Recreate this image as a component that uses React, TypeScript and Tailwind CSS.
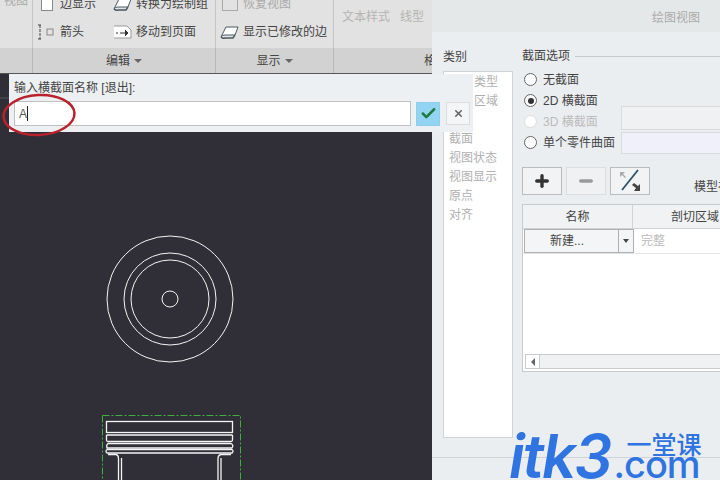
import { Check, Minus, Plus, X } from 'lucide-react'

const CATEGORY_ITEMS = ['截面', '视图状态', '视图显示', '原点', '对齐']

const RADIOS = [
  { label: '无截面', checked: false, disabled: false },
  { label: '2D 横截面', checked: true, disabled: false },
  { label: '3D 横截面', checked: false, disabled: true },
  { label: '单个零件曲面', checked: false, disabled: false },
]

function Caret() {
  return <span className="ml-1 h-0 w-0 border-x-[4px] border-t-[4px] border-x-transparent border-t-[#666]" />
}

function EdgeIcon() {
  return (
    <svg width="20" height="16" viewBox="0 0 20 16" fill="none" stroke="#4a5a62">
      <path d="M1 13 L6 3 H18 L15 11 H5 Q2 11 1 13 Z" fill="#fff" />
      <path d="M1 13 Q3 15 5 14 H13 L15 11" strokeWidth="1.400" />
    </svg>
  )
}

function ArrowIcon() {
  return (
    <svg width="20" height="20" viewBox="0 0 20 20" fill="none" stroke="#444">
      <path d="M3 3 V17 M1 3 H5 M1 17 H5" strokeDasharray="3 1" />
      <rect x="10" y="7" width="6" height="6" stroke="#888" />
    </svg>
  )
}

function MoveIcon() {
  return (
    <svg width="20" height="16" viewBox="0 0 20 16" fill="none" stroke="#333">
      <path d="M1 2 H14 L18 6 V14 H1" stroke="#999" fill="#fff" />
      <path d="M3 9 H5 M7 9 H14" />
      <path d="M12 6 L15 9 L12 12" fill="#333" />
    </svg>
  )
}

function RibbonItem({ icon, label, grey }: { icon: React.ReactNode; label: string; grey?: boolean }) {
  return (
    <div className={`flex h-[28px] items-center gap-[3px] whitespace-nowrap text-[12px] ${grey ? 'text-[#aaa]' : 'text-[#444]'}`}>
      <span className="flex w-[21px] justify-center">{icon}</span>
      {label}
    </div>
  )
}

function Ribbon() {
  return (
    <div className="flex h-[74px] shrink-0 flex-col overflow-hidden border-b border-[#555] bg-[#e2e2e2]">
      <div className="flex h-[48px] overflow-hidden">
        <div className="w-[33px] shrink-0 border-r border-[#c4c4c4]">
          <div className="mt-[-8px] pl-[4px] text-[12px] text-[#aaa]">视图</div>
        </div>
        <div className="flex w-[183px] shrink-0 gap-[16px] border-r border-[#c4c4c4] pl-[3px] pt-[16px]">
          <div className="mt-[-26px] flex flex-col">
            <RibbonItem icon={<span className="h-[14px] w-[12px] border border-[#888] bg-white" />} label="边显示" />
            <RibbonItem icon={<ArrowIcon />} label="箭头" />
          </div>
          <div className="mt-[-26px] flex flex-col">
            <RibbonItem icon={<EdgeIcon />} label="转换为绘制组" />
            <RibbonItem icon={<MoveIcon />} label="移动到页面" />
          </div>
        </div>
        <div className="w-[118px] shrink-0 border-r border-[#c4c4c4] pl-[3px] pt-[16px]">
          <div className="mt-[-26px] flex flex-col">
            <RibbonItem grey icon={<span className="h-[14px] w-[16px] border border-[#aaa]" />} label="恢复视图" />
            <RibbonItem icon={<EdgeIcon />} label="显示已修改的边" />
          </div>
        </div>
        <div className="flex gap-[10px] whitespace-nowrap pl-[8px] pt-[8px] text-[12px] text-[#b4b4b4]">
          <span>文本样式</span>
          <span>线型</span>
        </div>
      </div>
      <div className="flex flex-1 bg-[#d2d2d2] text-[12px] text-[#444]">
        <div className="w-[33px] shrink-0 border-r border-[#b8b8b8]" />
        <div className="flex w-[183px] shrink-0 items-center justify-center border-r border-[#b8b8b8]">
          编辑
          <Caret />
        </div>
        <div className="flex w-[118px] shrink-0 items-center justify-center border-r border-[#b8b8b8]">
          显示
          <Caret />
        </div>
        <div className="flex flex-1 items-center overflow-hidden whitespace-nowrap pl-[90px]">格</div>
      </div>
    </div>
  )
}

function Drawing() {
  return (
    <svg width="432" height="406" viewBox="0 74 432 406" fill="none" stroke="#f4f4f4" strokeWidth="1" className="block">
      <path d="M0 98 H10" stroke="#55555c" />
      <circle cx="170" cy="299" r="63" />
      <circle cx="170" cy="299" r="46" />
      <circle cx="170" cy="299" r="39" />
      <circle cx="170" cy="299" r="8" />
      <rect x="102.500" y="415.500" width="138" height="80" stroke="#3fae3f" strokeDasharray="7 2 2 2" />
      <rect x="106.500" y="421.500" width="126" height="11" strokeWidth="1.300" />
      <path d="M106.500 435 H232.500 M106.500 435 V440 Q106.500 441.500 108 441.500 H231 Q232.500 441.500 232.500 440 V435" strokeWidth="1.300" />
      <path d="M108 443.500 Q106 445 107 448 H232 Q234 445 231 443.500 Z" strokeWidth="1.300" />
      <path d="M107 449.500 H232 M107 449.500 Q105 451 107 453 H232 Q234 451 232 449.500" strokeWidth="1.300" />
      <path d="M108 454.500 H116 Q118.500 455 118.500 459 V480 M231 454.500 H221 Q218 455 218 459 V480 M121.500 458 V480 M221 458 V480" strokeWidth="1.300" />
    </svg>
  )
}

function PromptBar() {
  return (
    <div className="absolute left-[9px] top-[74px] flex h-[58px] w-[464px] flex-col bg-[#edf0f2] pl-[5px] pr-[3px]">
      <div className="flex h-[27px] items-center text-[12px] text-[#444]">输入横截面名称 [退出]:</div>
      <div className="flex items-center">
        <div className="flex h-[25px] w-[398px] items-center border border-[#c0c0c0] bg-white pl-[4px] text-[12px] text-[#555]">
          A<span className="h-[15px] w-px bg-[#222]" />
        </div>
        <div className="ml-[5px] flex h-[24px] w-[24px] items-center justify-center border border-[#8fcdea] bg-[#93d4f2]">
          <Check size={17} strokeWidth={3.5} className="text-[#1d7a3f]" />
        </div>
        <div className="ml-[6px] flex h-[23px] w-[24px] items-center justify-center border border-[#ddd] bg-[#f4f5f6]">
          <X size={11} strokeWidth={3.500} className="text-[#666]" />
        </div>
      </div>
    </div>
  )
}

function CategoryPanel() {
  return (
    <div className="flex w-[78px] shrink-0 flex-col pl-[11px] pt-[16px]">
      <div className="h-[23px] text-[12px] text-[#444]">类别</div>
      <div className="flex h-[367px] w-[70px] flex-col border border-[#d0d3d6] bg-white text-[12px] text-[#b0b0b0]">
        <div className="flex h-[19px] items-center pl-[30px]">类型</div>
        <div className="flex h-[19px] items-center pl-[30px]">区域</div>
        <div className="flex flex-col gap-[1px] pl-[5px] pt-[20px] leading-[18px]">
          {CATEGORY_ITEMS.map(item => (
            <div key={item}>{item}</div>
          ))}
        </div>
      </div>
    </div>
  )
}

function SectionTable() {
  return (
    <div className="mt-[9px] flex h-[168px] w-[210px] flex-col border border-[#c8cbce] bg-white text-[12px] text-[#444]">
      <div className="flex h-[24px] shrink-0 border-b border-[#d0d3d6] bg-[#f0f2f4]">
        <div className="flex w-[110px] items-center justify-center border-r border-[#d0d3d6]">名称</div>
        <div className="flex flex-1 items-center whitespace-nowrap pl-[38px]">剖切区域</div>
      </div>
      <div className="flex h-[25px] shrink-0 items-center border-b border-[#e4e4e4]">
        <div className="ml-[1px] flex h-[24px] w-[110px] shrink-0 border border-[#b0b0b0] bg-[#f4f5f6]">
          <div className="flex flex-1 items-center justify-center border-r border-[#b0b0b0] pr-[9px]">新建...</div>
          <div className="flex w-[14px] items-center justify-center"><span className="h-0 w-0 border-x-[3px] border-t-[4px] border-x-transparent border-t-[#444]" /></div>
        </div>
        <div className="pl-[7px] text-[#bbb]">完整</div>
      </div>
      <div className="flex-1" />
      <div className="mb-[2px] ml-[2px] flex h-[15px] shrink-0 border border-[#c8cbce] bg-[#f0f1f2]">
        <div className="flex w-[14px] items-center justify-center border-r border-[#c8cbce] bg-white">
          <span className="h-0 w-0 border-y-[4px] border-r-[4px] border-y-transparent border-r-[#666]" />
        </div>
      </div>
    </div>
  )
}

function Dialog() {
  return (
    <div className="flex flex-1 flex-col overflow-hidden bg-[#ebeef1]">
      <div className="flex h-[32px] shrink-0 items-center justify-end bg-[#e5e8e9] pr-[20px] pt-[3px] text-[12px] text-[#aaa]">绘图视图</div>
      <div className="flex h-[426px] shrink-0 border-b border-[#d0d3d6]">
        <CategoryPanel />
        <div className="flex flex-col whitespace-nowrap pl-[12px] pt-[16px] text-[12px] text-[#444]">
          <div className="flex h-[16px] w-[210px] items-center gap-[5px]">
            截面选项
            <span className="h-px flex-1 bg-[#c8cbce]" />
          </div>
          <div className="relative mt-[5px] flex flex-col">
            {RADIOS.map(r => (
              <div key={r.label} className={`flex h-[21px] items-center gap-[6px] pl-[2px] ${r.disabled ? 'text-[#bbb]' : ''}`}>
                <span className={`flex h-[13px] w-[13px] items-center justify-center rounded-full border bg-white ${r.disabled ? 'border-[#ddd]' : 'border-[#666]'}`}>
                  {r.checked && <span className="h-[6px] w-[6px] rounded-full bg-[#333]" />}
                </span>
                {r.label}
              </div>
            ))}
            <div className="absolute left-[99px] top-[37px] h-[24px] w-[120px] border border-[#d8dadc] bg-[#eff1f3]" />
            <div className="absolute left-[99px] top-[63px] h-[22px] w-[120px] border border-[#d8dadc] bg-[#f0f0fa]" />
          </div>
          <div className="mt-[14px] flex h-[28px] gap-[4px]">
            <div className="flex h-[28px] w-[40px] items-center justify-center border border-[#bbb] bg-[#f2f3f4]">
              <Plus size={18} strokeWidth={4.5} className="text-[#333]" />
            </div>
            <div className="flex h-[28px] w-[40px] items-center justify-center border border-[#ddd] bg-[#f0f1f3]">
              <Minus size={18} strokeWidth={4.5} className="text-[#999]" />
            </div>
            <div className="flex h-[28px] w-[40px] items-center justify-center border border-[#bbb] bg-[#f2f3f4]">
              <svg width="26" height="24" viewBox="0 0 26 24" fill="none">
                <path d="M21 1 L5 21" stroke="#2d4f66" strokeWidth="1.800" />
                <path d="M3 3 H8 L6 5 L9 8 L8 9 L5 6 L3 8 Z" fill="#aaa" />
                <path d="M23 22 H17 L19 19 L15 16 L17 14 L21 17 L23 15 Z" fill="#444" />
              </svg>
            </div>
            <div className="ml-[40px] self-end leading-[16px] text-[#444]">模型视</div>
          </div>
          <SectionTable />
        </div>
      </div>
    </div>
  )
}

function Watermark() {
  return (
    <div className="absolute left-[509px] top-[426px] flex items-start text-[#2f74e0]">
      <div className="text-[60px] font-semibold italic leading-[60px] tracking-[-2px] font-['Inter',sans-serif]">itk3</div>
      <div className="ml-[3px] flex flex-col items-end">
        <div className="mt-[9px] whitespace-nowrap text-[25px] font-medium leading-[20px]">一堂课</div>
        <div className="mr-[2px] mt-[-1px] text-[38px] font-medium leading-[20px] tracking-[-1px] font-['Inter',sans-serif]">.com</div>
      </div>
    </div>
  )
}

export default function App() {
  return (
    <div className="relative flex h-[480px] w-[720px] overflow-hidden bg-[#302f37] font-['Liberation_Sans','Noto_Sans_CJK_SC',sans-serif]">
      <div className="flex w-[432px] shrink-0 flex-col">
        <Ribbon />
        <Drawing />
      </div>
      <Dialog />
      <PromptBar />
      <svg width="80" height="50" viewBox="0 0 80 50" fill="none" className="absolute left-0 top-[91px]">
        <ellipse cx="39" cy="24" rx="35.500" ry="20" stroke="#b8222c" strokeWidth="2.500" transform="rotate(-3 39 24)" />
      </svg>
      <Watermark />
    </div>
  )
}
